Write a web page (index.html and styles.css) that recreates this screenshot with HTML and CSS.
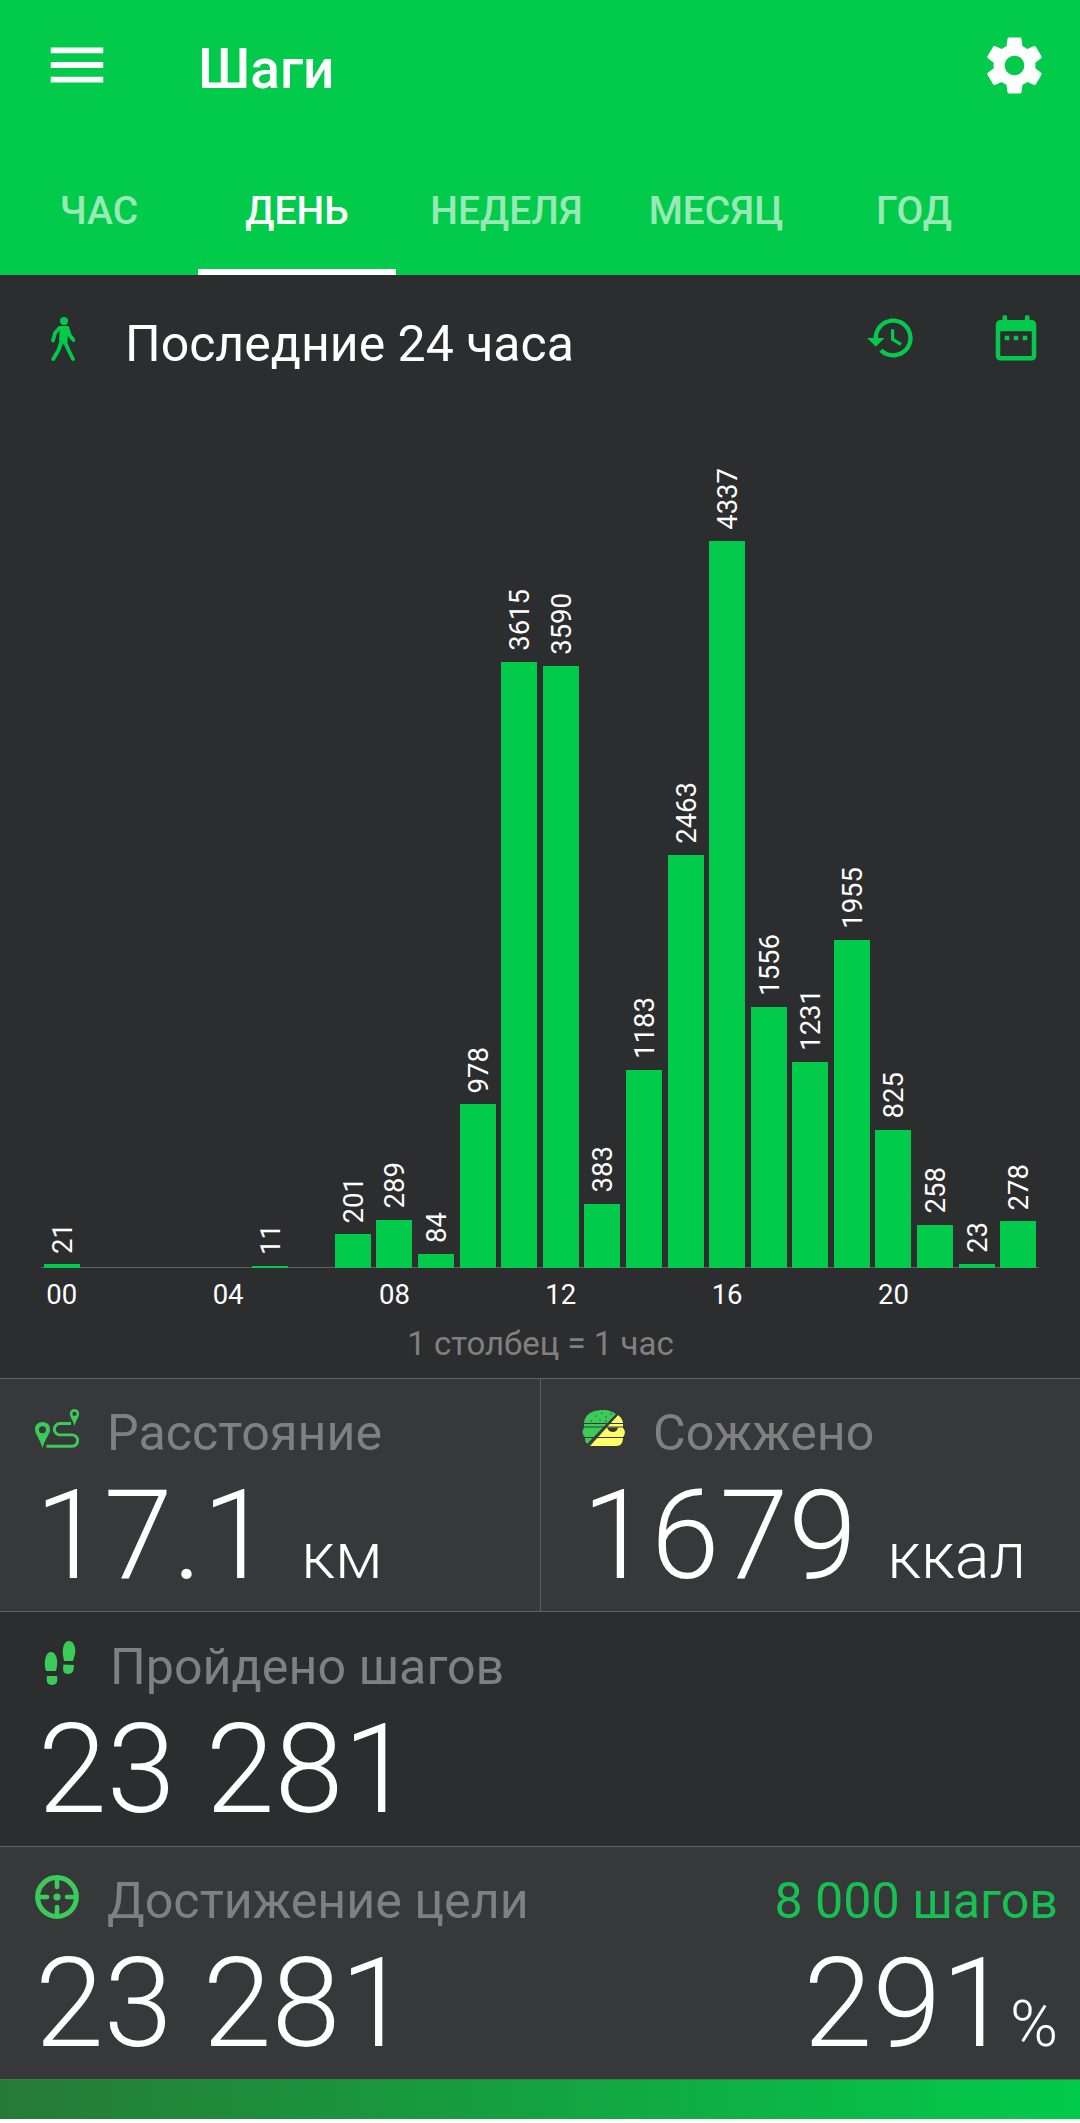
FILE: index.html
```html
<!DOCTYPE html>
<html lang="ru">
<head>
  <meta charset="UTF-8" />
  <title>Шаги</title>
  <meta name="viewport" content="width=device-width, initial-scale=1.0" />
  <link rel="stylesheet" href="styles.css">
</head>
<body>
  <header class="header">
    <div class="toolbar">
      <svg class="icon-menu" viewBox="0 0 24 24"><path d="M3 18h18v-2H3v2zm0-5h18v-2H3v2zm0-7v2h18V6H3z"/></svg>
      <h1>Шаги</h1>
      <svg class="icon-settings" viewBox="0 0 24 24"><path d="M19.43 12.98c.04-.32.07-.64.07-.98s-.03-.66-.07-.98l2.11-1.65c.19-.15.24-.42.12-.64l-2-3.46c-.12-.22-.39-.3-.61-.22l-2.49 1c-.52-.4-1.08-.73-1.69-.98l-.38-2.65C14.46 2.18 14.25 2 14 2h-4c-.25 0-.46.18-.49.42l-.38 2.65c-.61.25-1.17.59-1.69.98l-2.49-1c-.23-.09-.49 0-.61.22l-2 3.46c-.13.22-.07.49.12.64l2.11 1.65c-.04.32-.07.65-.07.98s.03.66.07.98l-2.11 1.65c-.19.15-.24.42-.12.64l2 3.46c.12.22.39.3.61.22l2.49-1c.52.4 1.08.73 1.69.98l.38 2.65c.03.24.24.42.49.42h4c.25 0 .46-.18.49-.42l.38-2.65c.61-.25 1.17-.59 1.69-.98l2.49 1c.23.09.49 0 .61-.22l2-3.46c.12-.22.07-.49-.12-.64l-2.11-1.65zM12 15.5c-1.93 0-3.5-1.57-3.5-3.5s1.57-3.5 3.5-3.5 3.5 1.57 3.5 3.5-1.57 3.5-3.5 3.5z"/></svg>
    </div>
    <nav class="tabs">
      <a class="tab">ЧАС</a>
      <a class="tab active">ДЕНЬ</a>
      <a class="tab wide">НЕДЕЛЯ</a>
      <a class="tab">МЕСЯЦ</a>
      <a class="tab">ГОД</a>
    </nav>
  </header>

  <section class="chart-panel">
    <div class="chart-title">
      <svg class="icon-walk" viewBox="0 0 24 44">
        <circle cx="13" cy="4" r="4"/>
        <path d="M8.500 11L4 16 2 23.500M16.500 11l2 7 4 5M10 26L7.500 33 2.300 42M13.500 24L17 32l5 10" fill="none" stroke="#02cb4b" stroke-width="3.800" stroke-linecap="round" stroke-linejoin="round"/>
        <path d="M9 9h7.500l1.500 3-1.500 10v4l-3 2-5.500-4 .5-8z"/>
      </svg>
      <h2>Последние 24 часа</h2>
      <svg class="icon-history" viewBox="0 0 24 24"><path d="M13 3c-4.970 0-9 4.030-9 9H1l3.890 3.890.07.14L9 12H6c0-3.870 3.130-7 7-7s7 3.130 7 7-3.130 7-7 7c-1.930 0-3.680-.79-4.940-2.060l-1.420 1.420C8.270 19.990 10.510 21 13 21c4.970 0 9-4.030 9-9s-4.030-9-9-9zm-1 5v5l4.280 2.540.72-1.210-3.500-2.080V8H12z"/></svg>
      <svg class="icon-calendar" viewBox="0 0 24 24"><path d="M9 11H7v2h2v-2zm4 0h-2v2h2v-2zm4 0h-2v2h2v-2zm2-7h-1V2h-2v2H8V2H6v2H5c-1.110 0-1.990.9-1.990 2L3 20c0 1.100.89 2 2 2h14c1.100 0 2-.9 2-2V6c0-1.100-.9-2-2-2zm0 16H5V9h14v11z"/></svg>
    </div>
    <div class="bars" id="bars"></div>
    <div class="hours" id="hours"></div>
    <p class="caption">1 столбец = 1 час</p>
  </section>

  <section class="row light split">
    <div class="cell">
      <div class="label">
        <svg class="icon" viewBox="0 0 44 44">
          <path fill-rule="evenodd" d="M7.500 15C3 15 0 18 0 22.300 0 27.500 4.500 31 7.500 41c3-10 7.500-13.500 7.500-18.700C15 18 12 15 7.500 15zm0 4.200a3.500 3.500 0 1 1 0 7 3.500 3.500 0 0 1 0-7z"/>
          <path fill-rule="evenodd" d="M39.500 2C36.500 2 34.800 4 34.800 7c0 3 3.200 6 4.700 12 1.500-6 4.700-9 4.700-12 0-3-1.700-5-4.700-5zm0 2.800a2.100 2.100 0 1 1 0 4.200 2.100 2.100 0 0 1 0-4.200z"/>
          <path d="M36 16.500H25a5.700 5.700 0 0 0 0 11.400h12a5.700 5.700 0 0 1 0 11.400H11.500" fill="none" stroke="#3bcb59" stroke-width="2.900"/>
        </svg>
        Расстояние
      </div>
      <div class="value">17.1 <small>км</small></div>
    </div>
    <div class="cell burned">
      <div class="label">
        <svg class="icon" viewBox="0 0 44 44">
          <path d="M2 16C3 7 10 3 21 3c6 0 11 2 14 5L7 38c-4-2-4-5-4-8-3-2-3-7-1-9z"/>
          <path fill="#ffff66" d="M36 8c4 3 5 6 5 9v4c3 3 2 7 0 9 0 6-2 9-7 9H8z"/>
          <path d="M1 16.500h42M1 20h42M2 30.500h40" stroke="#37383a" stroke-width="1"/>
          <path d="M5 38.500L36 6.500" stroke="#37383a" stroke-width="2"/>
          <path d="M25 20.500h11c-1 6-9 6-11 0z" fill="#37383a"/>
          <path d="M8 14h2M13 9h2M17 13h2M19 6h2M23 10h2M28 7h2M23 14h2" stroke="#276f3b"/>
        </svg>
        Сожжено
      </div>
      <div class="value">1679 <small>ккал</small></div>
    </div>
  </section>

  <section class="row steps">
    <div class="label">
      <svg class="icon" viewBox="0 0 44 44">
        <path d="M16 11c5 0 7 8 6 14l-1 5H11l-1-4c-1-7 1-15 6-15zM12 35h10c1 5 0 9-5 9s-6-4-5-9z"/>
        <path d="M34 0c5 0 7 7 6 13l-2 7H29l-1-6c-1-7 1-14 6-14zM28.500 23.500l10.500.5c0 5-1 9-6 9s-5.500-4-4.500-9.500z"/>
      </svg>
      Пройдено шагов
    </div>
    <div class="value">23 281</div>
  </section>

  <section class="row light goal">
    <div class="goal-line">
      <div class="label">
        <svg class="icon" viewBox="0 0 44 44">
          <g fill="none" stroke="#3bcb59">
            <circle cx="22" cy="22" r="19.400" stroke-width="5"/>
            <path d="M22 5v7M22 32v7M5 22h7M32 22h7" stroke-width="4.600" stroke-linecap="round"/>
          </g>
          <circle cx="22" cy="22" r="3.600"/>
        </svg>
        Достижение цели
      </div>
      <div class="target">8 000 шагов</div>
    </div>
    <div class="goal-line">
      <div class="value">23 281</div>
      <div class="value percent">291<small>%</small></div>
    </div>
  </section>
  <div class="progress"></div>

<script>
const steps = [21, 0, 0, 0, 0, 11, 0, 201, 289, 84, 978, 3615, 3590, 383, 1183, 2463, 4337, 1556, 1231, 1955, 825, 258, 23, 278];
const max = Math.max(...steps);
const bars = document.getElementById("bars");
const hours = document.getElementById("hours");

steps.forEach((n, i) => {
  const col = document.createElement("div");
  col.className = "col";
  if (n) {
    col.innerHTML = `<span>${n}</span><div class="bar" style="height:${n / max * 727.5}px"></div>`;
  }
  bars.appendChild(col);

  // hour label under every fourth bar
  const hour = document.createElement("div");
  hour.textContent = i % 4 === 0 ? String(i).padStart(2, "0") : "";
  hours.appendChild(hour);
});
</script>
</body>
</html>
```
FILE: styles.css
```css
* {
  box-sizing: border-box;
}
body {
  margin: 0;
  width: 1080px;
  height: 2123px;
  background: #fff;
  color: #fff;
  font-family: Roboto, sans-serif;
  overflow: hidden;
}
h1, h2, p {
  margin: 0;
}
svg {
  display: block;
  flex: none;
  fill: #02cb4b;
}
.header {
  height: 275px;
  background: #02cb4b;
}
.toolbar {
  display: flex;
  align-items: flex-start;
  height: 160px;
  padding: 30px 32px 0 42px;
}
.toolbar svg {
  fill: #fff;
}
.icon-menu {
  width: 70px;
  height: 70px;
}
.toolbar h1 {
  flex: 1;
  margin: 6px 0 0 86px;
  font-size: 55px;
  font-weight: 500;
  line-height: 66px;
}
.icon-settings {
  width: 67px;
  height: 67px;
  margin: 2px 0 0;
}
.tabs {
  display: flex;
  height: 115px;
}
.tab {
  width: 198px;
  padding-top: 28px;
  border-bottom: 6px solid transparent;
  text-align: center;
  font-size: 39px;
  font-weight: 500;
  line-height: 46px;
  color: rgba(255,255,255,0.6);
}
.tab.wide {
  width: 221px;
}
.tab.active {
  color: #fff;
  border-color: #fff;
}
.chart-panel {
  height: 1103px;
  background: #2c2d2f;
}
.chart-title {
  display: flex;
  align-items: flex-start;
  height: 165px;
  padding: 36px 37px 0 51px;
}
.icon-walk {
  width: 24px;
  height: 44px;
  margin-top: 6px;
}
.chart-title h2 {
  flex: 1;
  margin: 3px 0 0 50px;
  font-size: 50px;
  font-weight: 400;
  line-height: 60px;
}
.icon-history {
  width: 52px;
  height: 52px;
  margin: 1px 72px 0 0;
}
.icon-calendar {
  width: 54px;
  height: 54px;
}
.bars {
  display: grid;
  grid-template-columns: repeat(24, 1fr);
  height: 828px;
  margin: 0 41px;
  background: linear-gradient(#5f6062, #5f6062) bottom / 100% 1px no-repeat;
}
.col {
  display: flex;
  flex-direction: column;
  justify-content: flex-end;
  align-items: center;
}
.col span {
  margin: 0 0 11px 2px;
  writing-mode: vertical-rl;
  transform: rotate(180deg);
  font-size: 27.5px;
  line-height: 34px;
}
.bar {
  width: 36px;
  background: #02cb4b;
}
.hours {
  display: grid;
  grid-template-columns: repeat(24, 1fr);
  height: 50px;
  margin: 0 41px;
  padding-top: 10px;
  text-align: center;
  font-size: 27.5px;
  line-height: 34px;
}
.caption {
  text-align: center;
  font-size: 33px;
  line-height: 40px;
  padding: 6px 0 0 1px;
  color: #808080;
}
.row {
  height: 235px;
  border-top: 1px solid #5f6062;
  background: #2c2d2f;
  padding: 0 22px 0 35px;
}
.row.light {
  background: #37383a;
}
.row.split {
  display: flex;
  height: 233px;
  padding: 0;
}
.cell {
  width: 540px;
  padding-left: 35px;
}
.cell.burned {
  border-left: 1px solid #5f6062;
  padding-left: 41px;
}
.label {
  display: flex;
  height: 92px;
  padding-top: 24px;
  font-size: 50.2px;
  line-height: 60px;
  color: #808080;
}
.icon {
  width: 44px;
  height: 44px;
  margin: 4px 28px 0 0;
  fill: #3bcb59;
}
.burned .icon {
  margin-right: 27px;
}
.value {
  font-size: 124px;
  font-weight: 300;
  line-height: 130px;
  white-space: pre;
}
.value small {
  font-size: 65px;
}
.steps .label {
  padding-top: 25px;
  height: 93px;
}
.steps .icon {
  margin-right: 31px;
}
.steps .value {
  padding-left: 3px;
}
.goal {
  height: 233px;
}
.goal-line {
  display: flex;
  justify-content: space-between;
}
.target {
  padding-top: 24px;
  font-size: 50.2px;
  line-height: 60px;
  color: #17c052;
}
.progress {
  height: 40px;
  border-top: 1px solid #427d4e;
  background: linear-gradient(90deg, #267a36, #02cb4b);
}
```
